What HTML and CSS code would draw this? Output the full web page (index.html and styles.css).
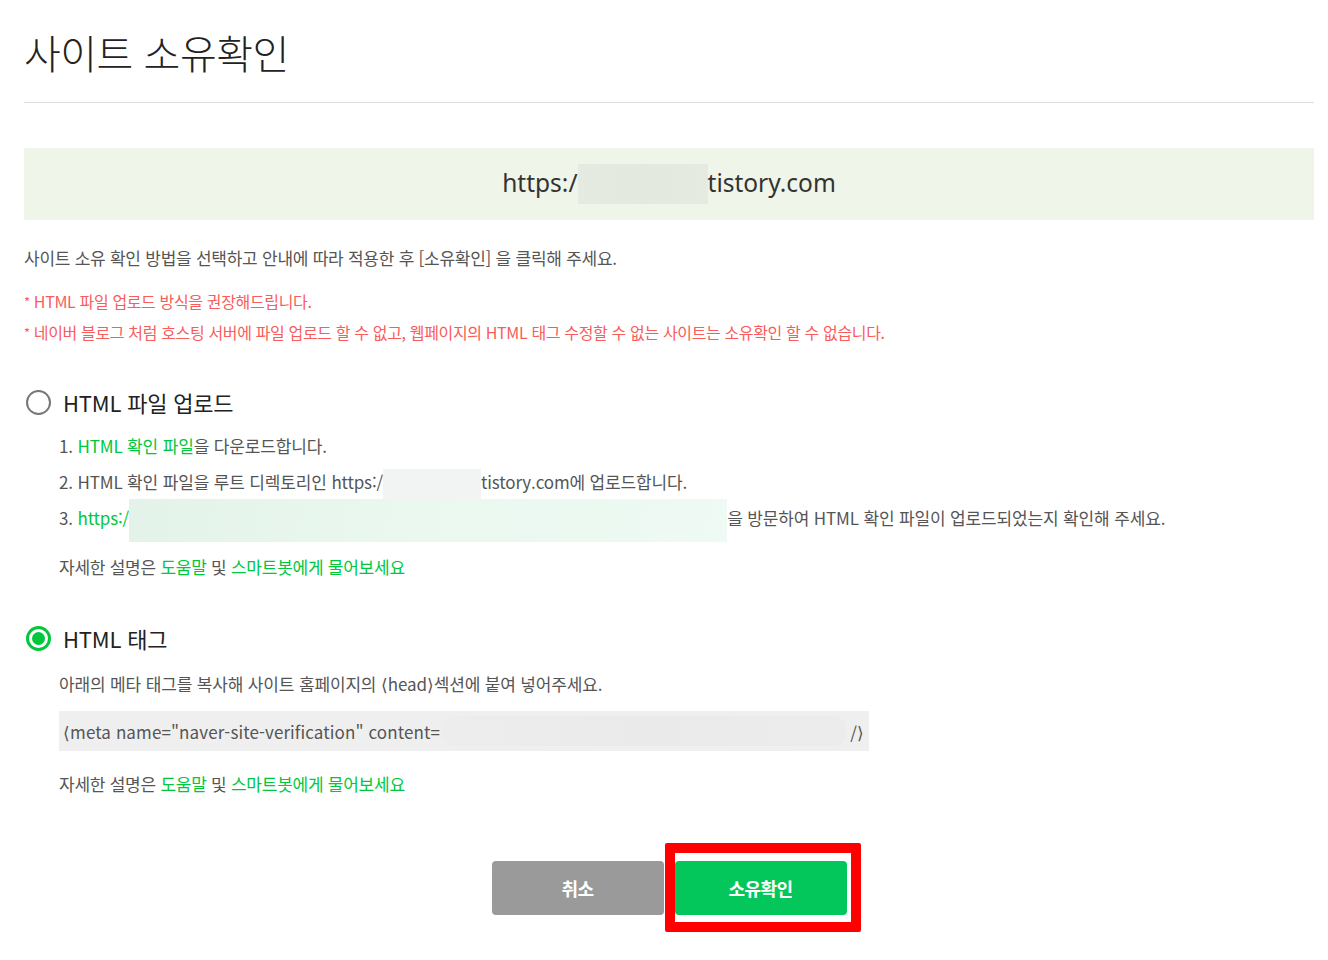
FILE: index.html
```html
<!DOCTYPE html>
<html lang="ko">
<head>
<meta charset="utf-8">
<title>사이트 소유확인</title>
<link rel="stylesheet" href="styles.css">
</head>
<body>
<div class="page">
  <div class="title-wrap">
    <h1 class="title">사이트 소유확인</h1>
  </div>

  <div class="domain">https:/<span class="domain-blur"></span>tistory.com</div>

  <p class="desc">사이트 소유 확인 방법을 선택하고 안내에 따라 적용한 후 [소유확인] 을 클릭해 주세요.</p>

  <div class="notes">
    <p class="note"><span class="star">*</span> HTML 파일 업로드 방식을 권장해드립니다.</p>
    <p class="note"><span class="star">*</span> 네이버 블로그 처럼 호스팅 서버에 파일 업로드 할 수 없고, 웹페이지의 HTML 태그 수정할 수 없는 사이트는 소유확인 할 수 없습니다.</p>
  </div>

  <div class="option option-first">
    <div class="option-head"><span class="radio"></span><span>HTML 파일 업로드</span></div>
    <ol class="steps">
      <li>1. <a class="link">HTML 확인 파일</a>을 다운로드합니다.</li>
      <li>2. HTML 확인 파일을 루트 디렉토리인 https:/<span class="blur-grey"></span>tistory.com에 업로드합니다.</li>
      <li>3. <a class="link">https:/</a><span class="blur-mint"></span>을 방문하여 HTML 확인 파일이 업로드되었는지 확인해 주세요.</li>
    </ol>
    <p class="help">자세한 설명은 <a class="link">도움말</a> 및 <a class="link">스마트봇에게 물어보세요</a></p>
  </div>

  <div class="option option-second">
    <div class="option-head"><span class="radio radio-on"><span class="radio-dot"></span></span><span>HTML 태그</span></div>
    <p class="tag-desc">아래의 메타 태그를 복사해 사이트 홈페이지의 ⟨head⟩섹션에 붙여 넣어주세요.</p>
    <div class="meta-box"><span class="meta-text">⟨meta name="naver-site-verification" content=</span><span class="meta-blur"></span><span class="meta-end">/⟩</span></div>
    <p class="help help-second">자세한 설명은 <a class="link">도움말</a> 및 <a class="link">스마트봇에게 물어보세요</a></p>
  </div>

  <div class="buttons">
    <button class="btn btn-cancel">취소</button>
    <div class="confirm-wrap">
      <button class="btn btn-confirm">소유확인</button>
      <div class="highlight"></div>
    </div>
  </div>
</div>
</body>
</html>
```
FILE: styles.css
```css
* { box-sizing: border-box; }
html, body { overflow: visible; }
body {
  margin: 0;
  font-family: "Noto Sans CJK KR", "Noto Sans", sans-serif;
  color: #555;
  background: #fff;
}
p { margin: 0; }
.page {
  padding: 0 14px 45px 24px;
}
.title-wrap {
  padding-top: 30px;
  padding-bottom: 28px;
  border-bottom: 1px solid #ddd;
}
.title {
  margin: 0;
  font-size: 40px;
  font-weight: 300;
  line-height: 44px;
  color: #222;
  letter-spacing: -0.5px;
}
.domain {
  margin-top: 45px;
  height: 72px;
  padding-bottom: 3px;
  background: #f0f5e9;
  display: flex;
  align-items: center;
  justify-content: center;
  font-family: "Noto Sans", "Noto Sans CJK KR", sans-serif;
  font-size: 24.5px;
  font-weight: 400;
  color: #333;
}
.domain-blur {
  display: inline-block;
  width: 130px;
  height: 40px;
  margin-top: 3px;
  background: linear-gradient(90deg, #e6ebe1, #e3e9df 50%, #e6ebe1);
}
.desc {
  margin-top: 26px;
  font-size: 17px;
  line-height: 24px;
  letter-spacing: -0.25px;
}
.notes {
  margin-top: 19px;
  color: #fa5b5b;
  font-size: 16px;
  line-height: 24px;
  letter-spacing: -0.35px;
}
.note + .note { margin-top: 7px; }
.star {
  font-size: 13px;
  line-height: 1;
  vertical-align: top;
  position: relative;
  top: 6px;
}
.option-first { margin-top: 43px; }
.option-second { margin-top: 44px; }
.option-head {
  display: flex;
  align-items: center;
  gap: 12px;
  height: 30px;
  font-size: 22px;
  line-height: 30px;
  color: #222;
  letter-spacing: -0.2px;
}
.radio {
  margin-left: 2px;
  width: 25px;
  height: 25px;
  border-radius: 50%;
  border: 2.5px solid #777;
  flex: none;
  display: flex;
  align-items: center;
  justify-content: center;
}
.radio-on {
  border: 3px solid #00c73c;
}
.radio-dot {
  width: 13px;
  height: 13px;
  border-radius: 50%;
  background: #00c73c;
}
.steps {
  list-style: none;
  margin: 11px 0 0 35px;
  padding: 0;
  font-size: 17px;
  line-height: 36px;
  letter-spacing: -0.15px;
}
.steps li { height: 36px; }
.link {
  color: #00c73c;
  text-decoration: none;
}
.blur-grey {
  display: inline-block;
  width: 98px;
  height: 30px;
  margin: -3px 0;
  vertical-align: middle;
  background: #f2f3f3;
}
.blur-mint {
  display: inline-block;
  width: 598px;
  height: 43px;
  margin: -4px 0;
  vertical-align: middle;
  background: linear-gradient(100deg, #e4f3ea, #eaf8f0 50%, #eefaf3);
}
.help {
  margin: 19px 0 0 35px;
  font-size: 17px;
  line-height: 24px;
  letter-spacing: -0.25px;
}
.help-second { margin-top: 21px; }
.tag-desc {
  margin: 19px 0 0 35px;
  font-size: 17px;
  line-height: 24px;
  letter-spacing: -0.15px;
}
.meta-box {
  margin: 15px 0 0 35px;
  width: 810px;
  height: 40px;
  background: #efefef;
  display: flex;
  align-items: center;
  padding: 0 5px 0 4px;
  font-size: 17px;
  letter-spacing: 0.1px;
  color: #555;
}
.meta-blur {
  flex: 1;
  height: 30px;
  margin: 0 4px 0 2px;
  background: linear-gradient(90deg, #ededed, #eaeaea 50%, #ececec);
  border-radius: 12px;
}
.buttons {
  margin-top: 65px;
  display: flex;
  justify-content: center;
  gap: 11px;
}
.btn {
  display: block;
  width: 172px;
  height: 54px;
  border: none;
  border-radius: 4px;
  color: #fff;
  font-family: "Noto Sans CJK KR", sans-serif;
  font-size: 18px;
  font-weight: 700;
  letter-spacing: -0.5px;
  padding: 0;
}
.btn-cancel { background: #9a9a9a; }
.btn-confirm { background: #03c75a; }
.confirm-wrap {
  position: relative;
  width: 172px;
  height: 54px;
}
.highlight {
  position: absolute;
  left: -10px;
  top: -18px;
  width: 196px;
  height: 89px;
  border: 10px solid #ff0000;
  border-radius: 2px;
  pointer-events: none;
}
```
